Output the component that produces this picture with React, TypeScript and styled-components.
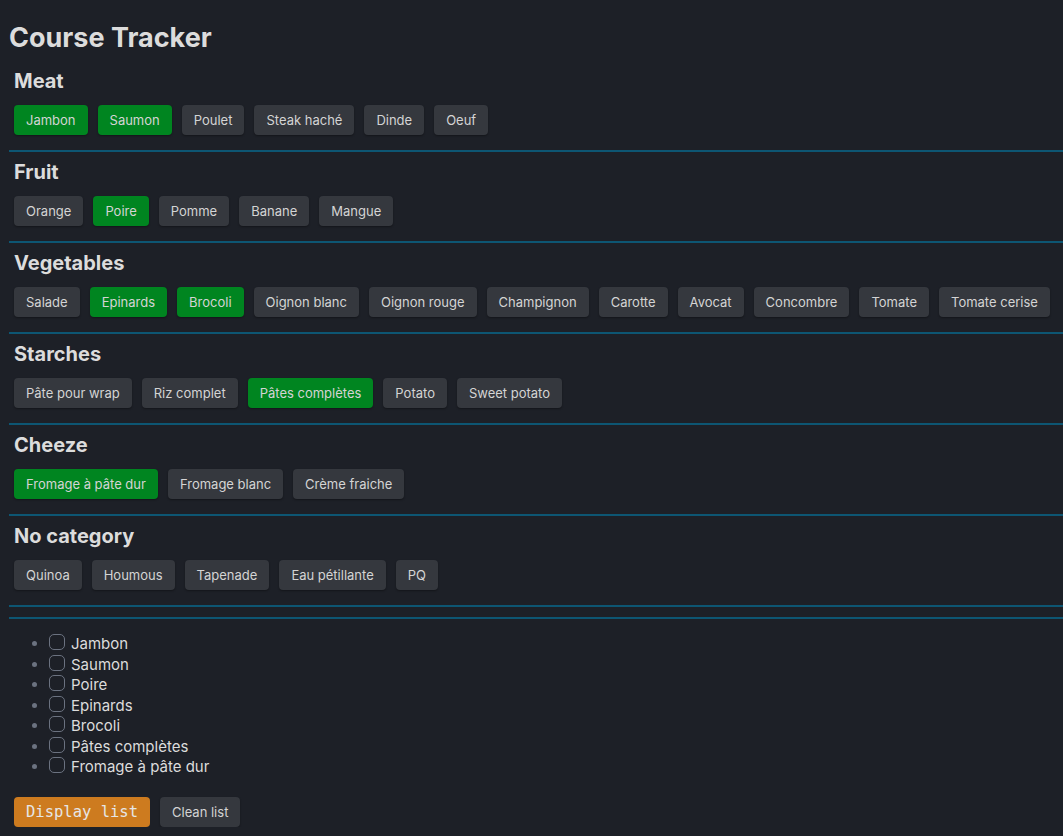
import React from "react";
import styled, { createGlobalStyle } from "styled-components";

const Global = createGlobalStyle`
  html, body { margin: 0; padding: 0; background: #1d2027; }
  body {
    color: #dbdbdb;
    font-family: Inter, "Noto Sans", sans-serif;
    padding: 21px 0 0 8px;
  }
`;

const Page = styled.div`
  display: flex;
  flex-direction: column;
`;

const Title = styled.h1`
  margin: 0 0 14px 0;
  font-size: 27px;
  line-height: 34px;
  font-weight: 700;
  color: #dcdcdc;
  padding-left: 1px;
`;

const Section = styled.section`
  padding: 0 6px;
  display: flex;
  flex-direction: column;
`;

const Heading = styled.h2`
  margin: 0 0 12px 0;
  font-size: 20px;
  line-height: 24px;
  font-weight: 700;
  color: #dcdcdc;
`;

const Row = styled.div`
  display: flex;
  flex-wrap: wrap;
  gap: 10px;
`;

const Chip = styled.button<{ $on?: boolean }>`
  height: 30px;
  padding: 0 12px;
  border: none;
  border-radius: 4px;
  font-family: Inter, "Noto Sans", sans-serif;
  font-size: 13px;
  color: #d4d4d4;
  background: ${(p) => (p.$on ? "#008520" : "#35383e")};
  box-shadow: 0 1px 2px rgba(0, 0, 0, 0.35);
  cursor: pointer;
`;

const Rule = styled.hr<{ $top?: number; $bottom?: number }>`
  border: none;
  height: 2px;
  background: #0d5673;
  margin: ${(p) => p.$top ?? 15}px 0 ${(p) => p.$bottom ?? 8}px 1px;
`;

const List = styled.ul`
  margin: 15px 0 0 0;
  padding: 0 0 0 41px;
  list-style: disc;
  font-size: 15px;
  line-height: 20.5px;
  color: #dcdcdc;
  li::marker { color: #6b7280; font-size: 15px; }
`;

const Item = styled.li`
  padding-left: 0;
`;

const Check = styled.input`
  appearance: none;
  width: 16px;
  height: 16px;
  margin: 0 6px 0 0;
  border: 1px solid #6b7280;
  border-radius: 5px;
  background: transparent;
  vertical-align: top;
`;

const Actions = styled.div`
  display: flex;
  gap: 10px;
  margin: 19px 0 0 6px;
`;

const Primary = styled.button`
  height: 30px;
  padding: 0 12px;
  border: none;
  border-radius: 4px;
  background: #cd7b1f;
  color: #e6e6e6;
  font-family: "DejaVu Sans Mono", monospace;
  font-size: 15.5px;
`;

const Secondary = styled(Chip)``;

const data: { name: string; items: [string, boolean][] }[] = [
  { name: "Meat", items: [["Jambon", true], ["Saumon", true], ["Poulet", false], ["Steak haché", false], ["Dinde", false], ["Oeuf", false]] },
  { name: "Fruit", items: [["Orange", false], ["Poire", true], ["Pomme", false], ["Banane", false], ["Mangue", false]] },
  { name: "Vegetables", items: [["Salade", false], ["Epinards", true], ["Brocoli", true], ["Oignon blanc", false], ["Oignon rouge", false], ["Champignon", false], ["Carotte", false], ["Avocat", false], ["Concombre", false], ["Tomate", false], ["Tomate cerise", false]] },
  { name: "Starches", items: [["Pâte pour wrap", false], ["Riz complet", false], ["Pâtes complètes", true], ["Potato", false], ["Sweet potato", false]] },
  { name: "Cheeze", items: [["Fromage à pâte dur", true], ["Fromage blanc", false], ["Crème fraiche", false]] },
  { name: "No category", items: [["Quinoa", false], ["Houmous", false], ["Tapenade", false], ["Eau pétillante", false], ["PQ", false]] },
];

export default function App() {
  const selected = data.flatMap((c) => c.items.filter((i) => i[1]).map((i) => i[0]));
  return (
    <Page>
      <Global />
      <Title>Course Tracker</Title>
      {data.map((cat) => (
        <React.Fragment key={cat.name}>
          <Section>
            <Heading>{cat.name}</Heading>
            <Row>
              {cat.items.map(([n, on]) => (
                <Chip key={n} $on={on}>{n}</Chip>
              ))}
            </Row>
          </Section>
          <Rule />
        </React.Fragment>
      ))}
      <Rule $top={2} $bottom={0} />
      <List>
        {selected.map((s) => (
          <Item key={s}>
            <Check type="checkbox" />
            {s}
          </Item>
        ))}
      </List>
      <Actions>
        <Primary>Display list</Primary>
        <Secondary>Clean list</Secondary>
      </Actions>
    </Page>
  );
}
